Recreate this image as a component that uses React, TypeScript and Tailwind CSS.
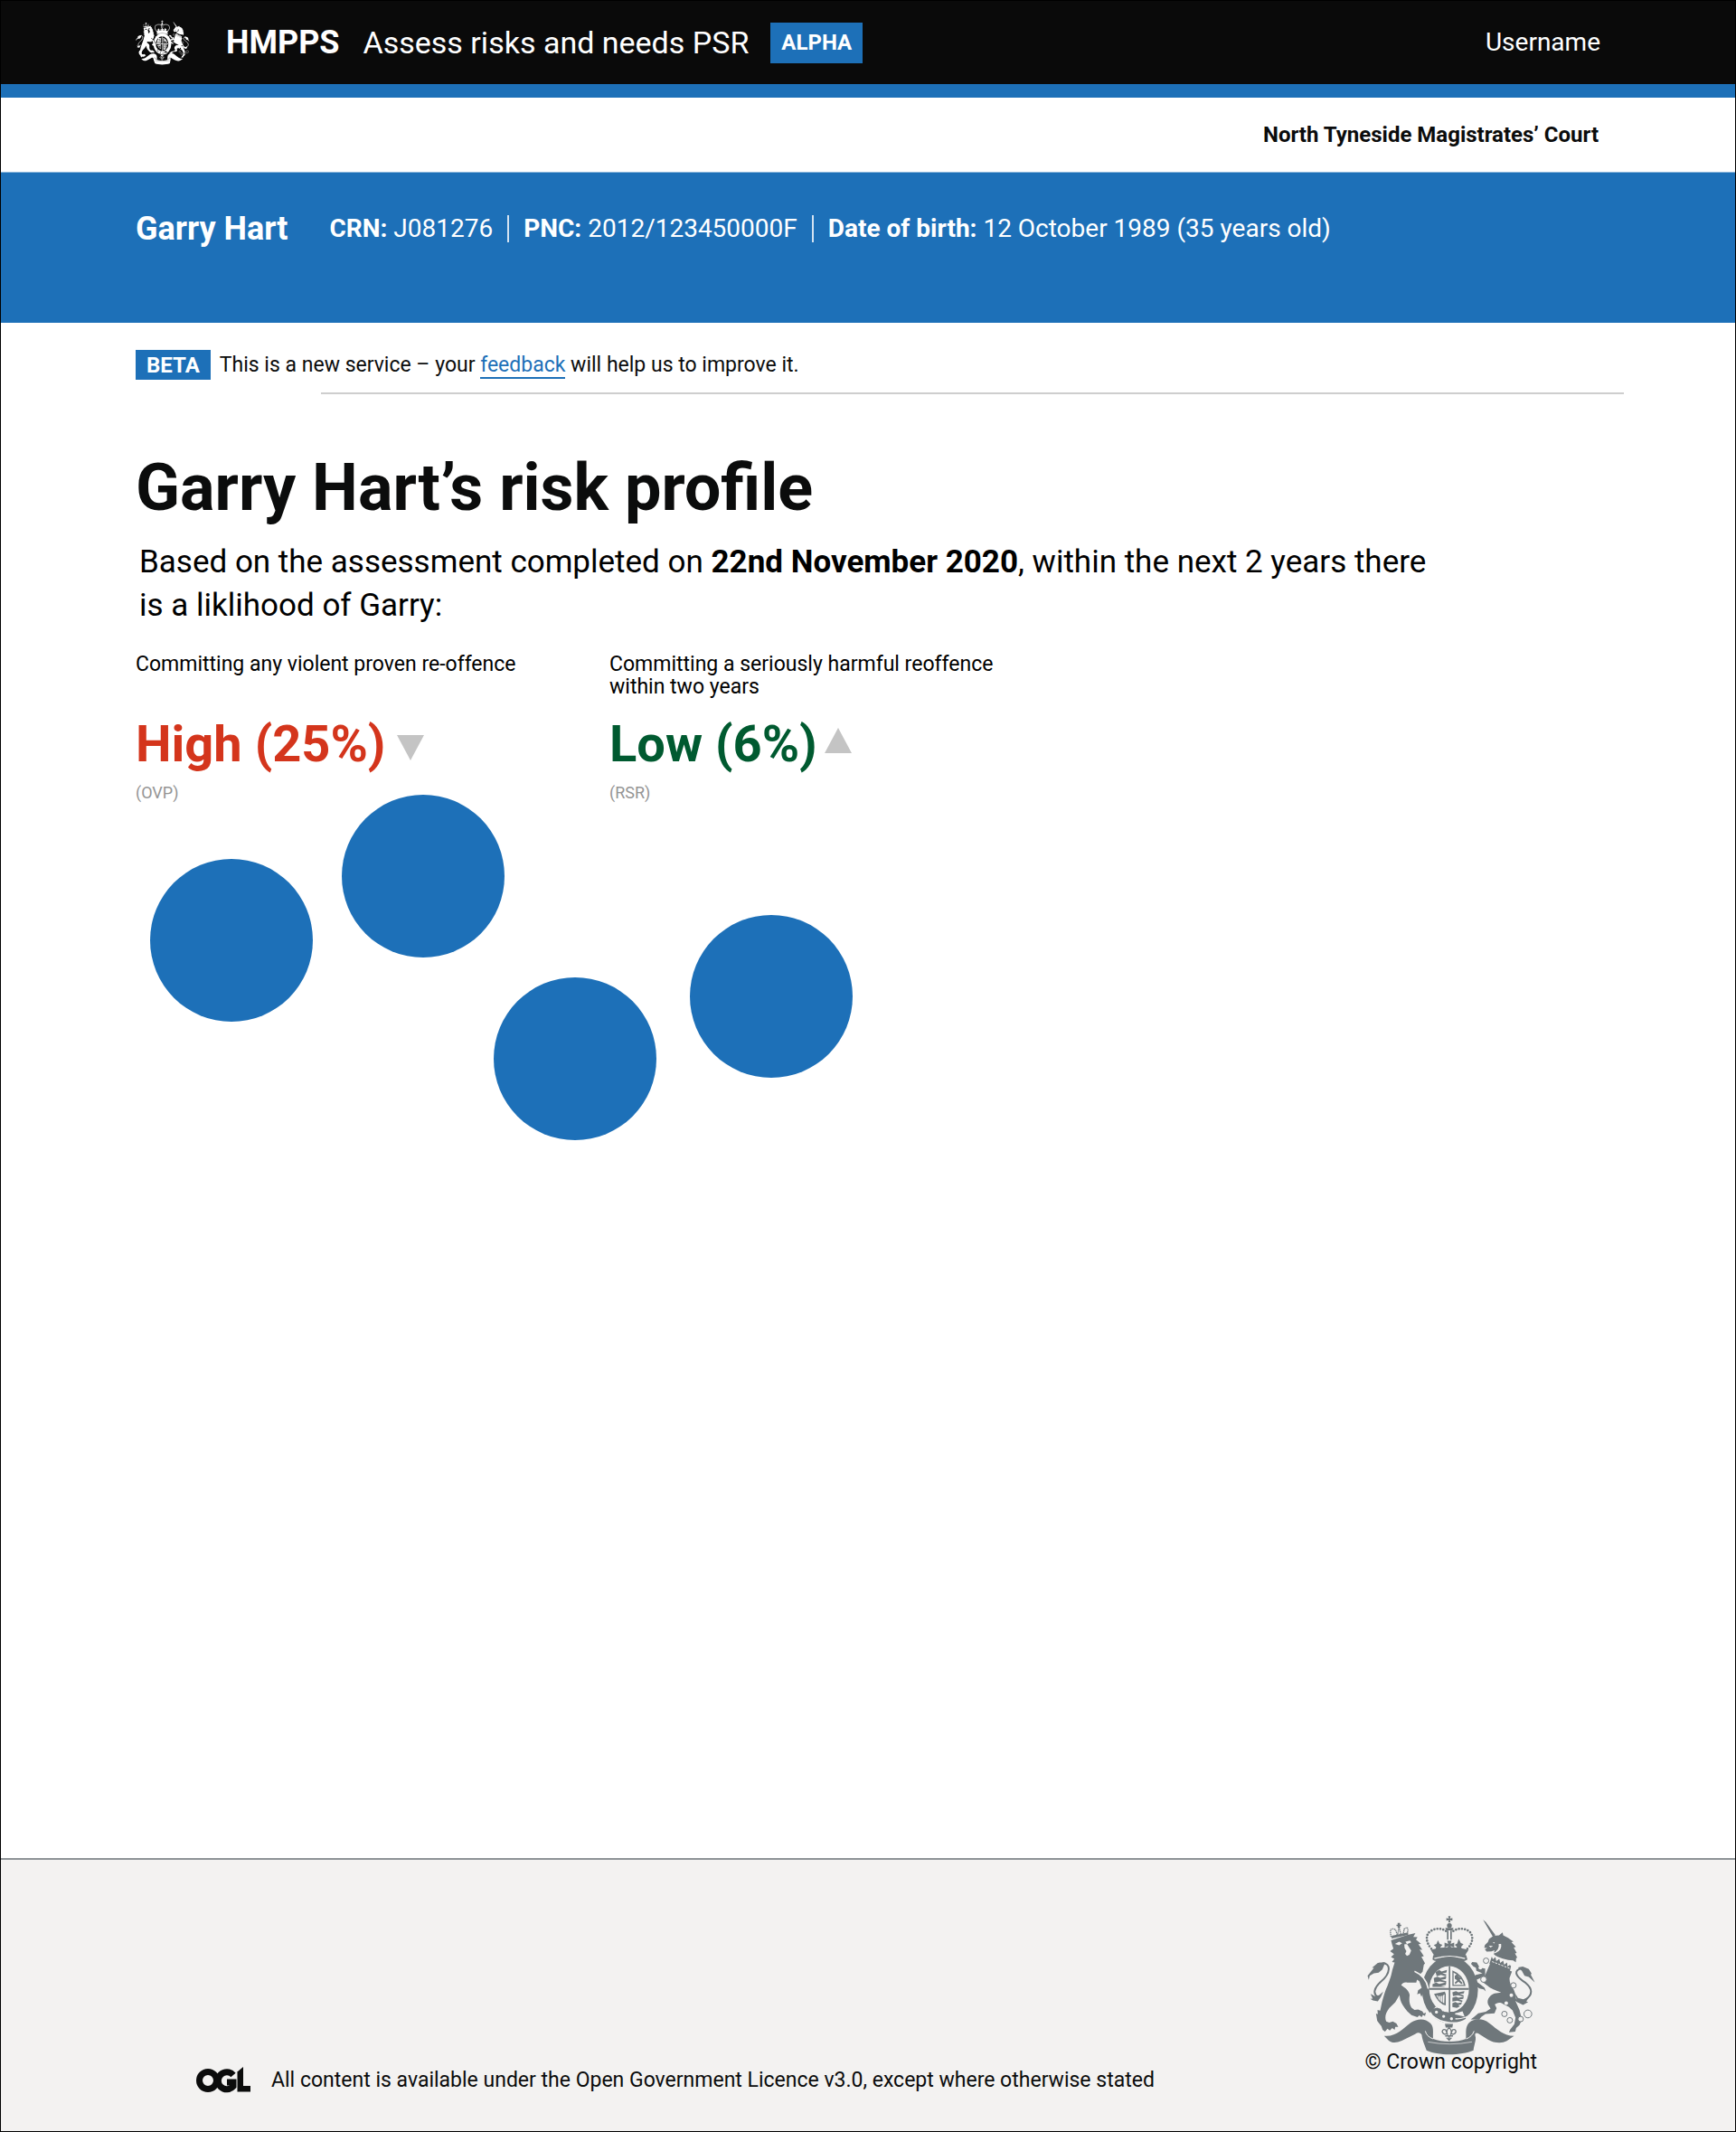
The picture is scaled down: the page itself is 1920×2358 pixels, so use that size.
import React from "react";

type CrestProps = { className: string; ground: string };

const circles = [
  { cx: 90, cy: 161 },
  { cx: 302, cy: 90 },
  { cx: 470, cy: 292 },
  { cx: 687, cy: 223 },
];

function Crest({ className, ground }: CrestProps) {
  return (
    <svg viewBox="96 56 564 466" className={className} fill="currentColor" role="img" aria-label="Royal coat of arms">
      {/* crown */}
      <g>
        <path d="M368 60h8l-2 8 8-2v9l-8-2 2 8h-8l2-8-8 2v-9l8 2z" />
        <circle cx="372" cy="91" r="8" />
        <path d="M358 99h28l-4 8h-20z" />
        <path d="M364 108h5v30h-5zM375 108h5v30h-5z" />
        <path d="M356 148l12 4-3-10h14l-3 10 12-4v16l-12-5 4 12h-16l4-12-12 5z" />
        <path d="M334 140l6 12 9 3-7 8 3 10h-20l3-10-8-7 9-4zM403 136l7 13 9 4-8 9 3 10h-20l3-10-7-7 8-4z" />
        <path d="M310 172q62-18 126 0l-8 12-8 15q-46-14-92 0l-10-14z" />
        <path d="M318 190q54-14 110 0l4 14q-14 10-24 4-34-14-70 0-14 4-22-4z" />
        <path
          d="M312 168C292 146 292 118 312 108C330 98 350 101 362 110M432 168C454 146 452 118 434 108C416 98 396 101 384 110"
          fill="none"
          stroke="currentColor"
          strokeWidth="8"
          strokeLinecap="round"
          strokeDasharray="0 10"
        />
        <path d="M322 201q50-16 102 0" fill="none" stroke={ground} strokeWidth="4" />
      </g>

      {/* garter ring and shield */}
      <ellipse cx="374" cy="305" rx="93" ry="111" />
      <ellipse cx="371" cy="303" rx="66" ry="77" fill={ground} />
      <g>
        <path d="M370 226h5v154h-5zM305 299h132v6h-132z" />
        <path d="M326 246l12-7 8 5 18-5-2 9-14 2 14 4-2 6-16-5-14 5zM320 266l12-5 10 4 20-5-2 9-16 3 18 4-2 5-20-4-18 4zM316 286l12-5 10 4 24-5-2 9-16 2 16 4h-44z" />
        <path d="M382 240q36 14 44 52h-44zm4 8v40h34q-8-28-34-40z" fillRule="evenodd" />
        <path d="M390 258l8-6 4 8 10 8-6 4 10 10-4 4-10-8-10 8-2-5 8-8-8-5z" />
        <path d="M321 318l36-7 3 8v38q-24-6-39-39zm8 4q6 20 26 28l1-30q-12 10-27 2z" fillRule="evenodd" />
        <path d="M335 322v18M342 322v24M349 320v30" stroke="currentColor" strokeWidth="2" />
        <path d="M382 313l12-4 8 4 20-4-2 8-14 2 14 4-2 4-18-4-16 3zM382 331l12-4 8 4 18-4-2 8-14 2 12 4-2 4-16-4-16 3zM382 349l10-4 8 4 14-3-3 8-10 2 6 4-10 5-15-3z" />
      </g>
      <path d="M316 372q28 28 60 28 26 0 46-8" fill="none" stroke={ground} strokeWidth="34" />
      <path d="M317 368l14-4 12 4 6 8 74 18 4 7q-26 16-60 10-30-4-50-22l-8-12z" />
      <path d="M372 378h22l-6 13-20-4z" />
      <circle cx="329" cy="379" r="5" fill={ground} />
      <circle cx="353" cy="393" r="5" fill={ground} />
      <circle cx="379" cy="401" r="5" fill={ground} />
      <path d="M392 401q26 2 56-15" fill="none" stroke={ground} strokeWidth="4" />

      {/* ribbon */}
      <path d="M155 458C196 462 216 434 244 414C266 399 292 399 309 416C322 429 316 448 318 468C346 480 400 480 427 468C428 448 424 428 438 414C456 398 484 400 504 415C532 436 552 458 587 458L563 475C546 484 520 482 500 470L468 450C460 446 456 450 458 458C462 470 456 480 452 506C410 524 334 524 296 506C288 482 282 472 280 454C276 448 270 444 258 452L214 474C196 482 180 482 170 473Z" />
      <path d="M292 442q4 18 26 26M454 442q-6 18-26 26" fill="none" stroke={ground} strokeWidth="3" />
      <path d="M301 478q72 14 146 0" fill="none" stroke={ground} strokeWidth="2" />
      <path d="M357 418h27l-2 12h-22z" />
      <path
        d="M371 430q-13 14-4 25M371 430q13 14 4 25M366 450q-14 6-18-6 2-10 12-6l4 12M376 450q14 6 18-6-2-10-12-6l-4 12M358 458h26M371 458v14l-8-8M371 472l8-8"
        fill="none"
        stroke="currentColor"
        strokeWidth="4"
      />

      {/* lion */}
      <g>
        <path d="M178 140L233 122 259 116 252 129 266 130 261 138 278 152 269 153 282 172 273 171 287 193 279 195 291 217 287 221 283 245C270 257 266 265 262 281L232 281C222 278 214 284 212 290C225 298 238 308 240 322C238 338 238 350 246 364L256 372 268 370 282 376 287 384 294 380 291 392 284 388 280 396 272 390 266 396 246 389 232 376C220 362 212 350 209 338L206 322 192 346 172 366C160 382 156 396 162 410L172 414 184 410 196 417 202 428 192 428 190 438 182 432 174 440 166 434 158 444 150 438 146 426 132 408 128 384 134 386 133 372 142 374 148 345C154 325 158 308 166 292C172 275 178 262 182 240L190 214 181 212 189 202 178 196 188 186 175 176 186 168 182 156Z" />
        <path d="M257 246q34 14 42 52l4 18-5 8-4-9-3 13-7-11-5 11-5-12-9 4 3-14 12-8-8-22-24-16z" />
        <path d="M256 243q38 16 46 58" fill="none" stroke={ground} strokeWidth="5" />
        <path d="M191 152l14-7 10 5-10 7zM226 145l15-4 4 6-14 6zM222 154l9-2 8 13 6 9-6 14-8 4-6-7 4-9-6-10z" fill={ground} />
        <path
          d="M178 129l-2-17q-1-10 8-10 10 0 12 12l3 10M200 124l4-28 8 28M218 122l4-20q12-8 12 3l-2 16"
          fill="none"
          stroke="currentColor"
          strokeWidth="4"
          strokeDasharray="4 2"
        />
        <path d="M200 82h8v6h4v5h-4v5h-8v-5h-4v-5h4zM180 125l54-11 1 8-55 12z" />
        <path d="M150 216C178 216 178 250 144 278C122 298 116 318 134 328" fill="none" stroke="currentColor" strokeWidth="6" />
        <path d="M158 213l-24 2-19 16 6 1-21 26 4 14 3-14 14-8 16-2 12-11 6-14zM110 318l14 8 14-3 14-12-8 18-10 14-16-3-9-5 8-1z" />
      </g>

      {/* unicorn */}
      <g>
        <path d="M484 72l9 7 32 44-8 6z" />
        <path d="M519 125l18-1 12-10 2 10 16 8 18 13-7 1 15 16-7 2 10 18-6 2 8 14-4 1-1 14-9-6c-20 0-50-8-64-20l2-14-10 4-16 1-6-8 8-4-10-1 2-9 10-10 4-10z" />
        <path d="M503 158l14 1-8 5zM516 148l7-2-2 5zM536 152q4 22-22 32l12-2q22-10 18-30z" fill={ground} />
        <path d="M513 194l4 9 8-7 3 13 10-7 3 13 10-7 3 13 10-7 1 13 8-5 4 4-4 18-68-26z" />
        <path d="M514 211l60 23" fill="none" stroke={ground} strokeWidth="3" strokeDasharray="7 4" />
        <path d="M508 216l72 28-8 22c0 18 6 26 14 38l8 22-2 16 13 30 8 32-8 18-11 10-3 12-21 2 4-9 14-18 4-22-10-24-12-11-19-10c-12-8-22-4-28 2l6 12-7 17-30 2-14 10-7 9-28-1 11-8 14-12 25-5 16-11-5-8c-12-16 0-36 18-42l22-3c-18-8-36-14-44-22l-16-12 2-12z" />
        <path d="M491 234l-18-3-10-17-15-2-4 6 8 9 8 4 2 11 20 8-22 5-11 10 7 24 16 11 14 3 7 7-4-12-14-11-10-8-2-8 12-5 16-6z" />
        <path d="M588 334C598 346 608 348 622 340C652 322 648 300 626 282C598 264 584 246 604 236C612 232 618 234 624 238" fill="none" stroke="currentColor" strokeWidth="6" />
        <path d="M600 230l16-3 20 9 9 14-2 5 13 25-20-18-14-4-9-16zM592 318l8 14 18 4 17-7-7 15 6 1-17 10-20-10z" />
        <g fill={ground} stroke="currentColor" strokeWidth="3">
          <circle cx="494" cy="208" r="9" />
          <circle cx="486" cy="270" r="10" />
          <circle cx="585" cy="290" r="9" />
          <circle cx="555" cy="385" r="9" />
          <circle cx="573" cy="406" r="9" />
          <circle cx="609" cy="402" r="9" />
          <circle cx="633" cy="385" r="13" />
        </g>
        <g fill={ground}>
          <circle cx="578" cy="323" r="6" />
          <circle cx="561" cy="349" r="6" />
          <circle cx="475" cy="231" r="6" />
        </g>
      </g>
    </svg>
  );
}

function OglLogo() {
  return (
    <svg viewBox="0 0 60 30" className="h-[30px] w-[60px] shrink-0" fill="none" stroke="currentColor" strokeWidth="7" role="img" aria-label="Open Government Licence">
      <circle cx="13" cy="15" r="9.500" />
      <path d="M41 9A9.500 9.500 0 1 0 41 21.500V17H34" />
      <path d="M46 5L52 0V21H60V27.500H45.500V5Z" fill="currentColor" stroke="none" />
    </svg>
  );
}

export default function App() {
  return (
    <div className="flex min-h-screen flex-col border border-black bg-white font-['Roboto',sans-serif] text-[#0b0c0c]">
      <header>
        <div className="flex h-[92px] items-center bg-[#0a0a0a] px-[149px] text-white">
          <Crest className="h-[50px] w-[60px] shrink-0" ground="#0a0a0a" />
          <span className="ml-10 text-[36px] leading-[40px] font-bold">HMPPS</span>
          <span className="ml-[26px] text-[34px] leading-[40px]">Assess risks and needs PSR</span>
          <strong className="ml-6 flex h-[45px] items-center bg-[#1d70b8] px-3 text-[24px] font-bold">ALPHA</strong>
          <a href="#account" className="ml-auto text-[28px]">Username</a>
        </div>
        <div className="h-[15px] bg-[#1d70b8]" />
        <div className="flex h-[82px] items-center justify-end px-[151px] text-[24px] font-bold">North Tyneside Magistrates’ Court</div>
      </header>

      <section className="flex h-[167px] items-start border-t border-[#8eb8dc] bg-[#1d70b8] px-[149px] pt-[42px] text-white">
        <h2 className="text-[36px] leading-[40px] font-bold">Garry Hart</h2>
        <ul className="ml-[46px] flex items-center text-[28px] leading-[40px]">
          <li><strong className="font-bold">CRN:</strong> J081276</li>
          <li className="mx-4 h-[30px] w-0.5 bg-white/80" />
          <li><strong className="font-bold">PNC:</strong> 2012/123450000F</li>
          <li className="mx-4 h-[30px] w-0.5 bg-white/80" />
          <li><strong className="font-bold">Date of birth:</strong> 12 October 1989 (35 years old)</li>
        </ul>
      </section>

      <main className="flex flex-1 flex-col">
        <div className="mt-[30px] flex items-center px-[149px]">
          <strong className="flex h-[33px] items-center bg-[#1d70b8] px-3 text-[24px] font-bold text-white">BETA</strong>
          <p className="ml-2.5 text-[23px] leading-[30px]">
            This is a new service – your <a href="#feedback" className="border-b-2 border-[#1d70b8] text-[#1d70b8]">feedback</a> will help us to improve it.
          </p>
        </div>
        <hr className="mt-3.5 mr-[123px] ml-[354px] border-t-2 border-[#cecece]" />

        <div className="px-[149px]">
          <h1 className="mt-16 text-[72px] leading-[80px] font-bold">Garry Hart’s risk profile</h1>
          <p className="mt-[18px] ml-1 max-w-[1450px] text-[35px] leading-[48px] text-black">
            Based on the assessment completed on <strong className="font-bold">22nd November 2020</strong>, within the next 2 years there is a liklihood of Garry:
          </p>
          <div className="mt-7 flex gap-[94px]">
            <section className="w-[430px]">
              <h3 className="h-[52px] text-[23px] leading-[25px] text-black">Committing any violent proven re-offence</h3>
              <p className="mt-[17px] flex items-center text-[56px] leading-[64px] font-bold text-[#d4351c]">
                High (25%)
                <svg viewBox="0 0 30 28" className="mt-2 ml-3 h-7 w-[30px] fill-[#c4c4c4]" aria-hidden="true"><path d="M0 0H30L15 28Z" /></svg>
              </p>
              <p className="mt-2.5 text-[18px] leading-[24px] text-[#959595]">(OVP)</p>
            </section>
            <section className="w-[430px]">
              <h3 className="h-[52px] text-[23px] leading-[25px] text-black">Committing a seriously harmful reoffence within two years</h3>
              <p className="mt-[17px] flex items-center text-[56px] leading-[64px] font-bold text-[#005a30]">
                Low (6%)
                <svg viewBox="0 0 30 28" className="mb-2 ml-2 h-7 w-[30px] fill-[#c4c4c4]" aria-hidden="true"><path d="M0 28H30L15 0Z" /></svg>
              </p>
              <p className="mt-2.5 text-[18px] leading-[24px] text-[#959595]">(RSR)</p>
            </section>
          </div>
          <svg viewBox="0 0 777 382" className="-mt-2.5 ml-4 w-[777px] fill-[#1d70b8]" aria-hidden="true">
            {circles.map((c) => <circle key={c.cx} cx={c.cx} cy={c.cy} r="90" />)}
          </svg>
        </div>
      </main>

      <footer className="flex h-[302px] items-end justify-between border-t-2 border-[#8d9396] bg-[#f3f2f1] pr-[219px] pl-[216px]">
        <div className="mb-10 flex items-center text-[23px] leading-[32px]">
          <OglLogo />
          <p className="ml-[23px]">All content is available under the Open Government Licence v3.0, except where otherwise stated</p>
        </div>
        <a href="#copyright" className="mb-16 flex flex-col items-center text-[23px] leading-[24px]">
          <Crest className="-mb-1 h-[155px] w-[188px] text-[#6f777b]" ground="#f3f2f1" />
          © Crown copyright
        </a>
      </footer>
    </div>
  );
}
